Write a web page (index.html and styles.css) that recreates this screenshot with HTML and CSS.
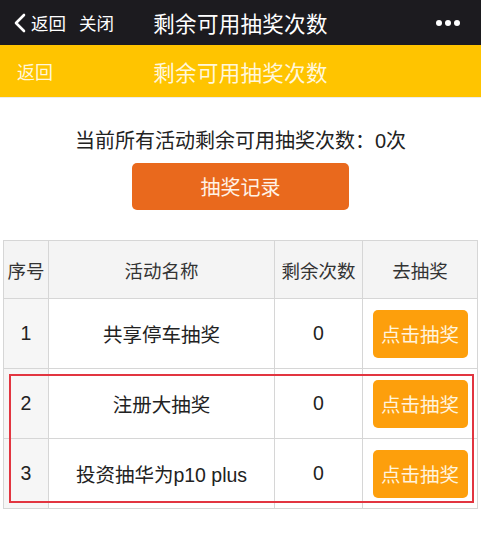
FILE: index.html
```html
<!DOCTYPE html>
<html lang="zh-CN">
<head>
<meta charset="utf-8">
<title>剩余可用抽奖次数</title>
<link rel="stylesheet" href="styles.css">
</head>
<body>
<div class="topbar">
  <div class="nav-left">
    <svg class="chev" width="14" height="20" viewBox="0 0 14 20"><path d="M11 2 L3 10 L11 18" fill="none" stroke="#fff" stroke-width="2.6" stroke-linecap="round" stroke-linejoin="round"/></svg>
    <span class="nav-back">返回</span>
    <span class="nav-close">关闭</span>
  </div>
  <div class="nav-title">剩余可用抽奖次数</div>
  <div class="nav-right">
    <span class="dot"></span><span class="dot"></span><span class="dot"></span>
  </div>
</div>
<div class="header">
  <span class="hdr-back">返回</span>
  <span class="hdr-title">剩余可用抽奖次数</span>
  <span></span>
</div>
<div class="main">
  <p class="summary">当前所有活动剩余可用抽奖次数：0次</p>
  <div class="record-wrap"><button class="record-btn">抽奖记录</button></div>
  <div class="table-wrap">
    <table class="lottery">
      <colgroup><col class="c1"><col class="c2"><col class="c3"><col class="c4"></colgroup>
      <thead>
        <tr><th>序号</th><th>活动名称</th><th>剩余次数</th><th>去抽奖</th></tr>
      </thead>
      <tbody>
        <tr><td class="idx">1</td><td>共享停车抽奖</td><td>0</td><td><button class="draw-btn">点击抽奖</button></td></tr>
        <tr><td class="idx">2</td><td>注册大抽奖</td><td>0</td><td><button class="draw-btn">点击抽奖</button></td></tr>
        <tr><td class="idx">3</td><td>投资抽华为p10 plus</td><td>0</td><td><button class="draw-btn">点击抽奖</button></td></tr>
      </tbody>
    </table>
    <div class="highlight"></div>
  </div>
</div>
</body>
</html>
```
FILE: styles.css
```css
html, body {
  margin: 0;
  padding: 0;
  background: #ffffff;
}
body {
  width: 481px;
  font-family: "Liberation Sans", "Noto Sans CJK SC", sans-serif;
  color: #222;
}
.topbar {
  height: 45px;
  background: #1c1b1f;
  display: grid;
  grid-template-columns: 1fr auto 1fr;
  align-items: center;
  color: #fff;
}
.nav-left {
  display: flex;
  align-items: center;
  padding-left: 13px;
  font-size: 17.5px;
}
.chev { margin-right: 4px; }
.nav-close { margin-left: 13px; }
.nav-title {
  font-size: 21.5px;
  letter-spacing: 0.3px;
}
.nav-right {
  display: flex;
  justify-content: flex-end;
  gap: 3px;
  padding-right: 21px;
}
.dot {
  width: 6px;
  height: 6px;
  border-radius: 50%;
  background: #fff;
}
.header {
  height: 52px;
  background: #ffc400;
  border-bottom: 1px solid #ececec;
  display: grid;
  grid-template-columns: 1fr auto 1fr;
  align-items: center;
  color: #fff7dc;
}
.hdr-back {
  padding-left: 17px;
  font-size: 18px;
}
.hdr-title {
  font-size: 21.5px;
  letter-spacing: 0.3px;
}
.main {
  padding-top: 29px;
}
.summary {
  margin: 0;
  text-align: center;
  font-size: 20px;
  line-height: 28px;
  color: #222;
}
.record-wrap {
  display: flex;
  justify-content: center;
  margin-top: 8px;
}
.record-btn {
  width: 217px;
  height: 47px;
  border: none;
  border-radius: 5px;
  background: #e9691d;
  color: #fff2e6;
  font-family: inherit;
  font-size: 20px;
  padding: 0;
}
.table-wrap {
  position: relative;
  margin: 30px 0 0 3px;
  width: 474px;
}
.lottery {
  width: 474px;
  border-collapse: collapse;
  table-layout: fixed;
  border: 1px solid #d6d6d6;
}
.c1 { width: 45px; }
.c2 { width: 226px; }
.c3 { width: 88px; }
.c4 { width: 115px; }
.lottery th, .lottery td {
  border: 1px solid #d6d6d6;
  padding: 0;
  text-align: center;
  vertical-align: middle;
}
.lottery th {
  height: 57px;
  background: #f4f4f4;
  font-weight: normal;
  font-size: 18.5px;
  color: #333;
}
.lottery td {
  height: 69px;
  font-size: 19.5px;
  color: #222;
}
.lottery td.idx {
  background: #f6f6f6;
}
.draw-btn {
  width: 95px;
  height: 48px;
  border: none;
  border-radius: 5px;
  background: #fd9f0c;
  color: #fff3dd;
  font-family: inherit;
  font-size: 19.5px;
  padding: 0;
}
.highlight {
  position: absolute;
  left: 6px;
  top: 134px;
  width: 465px;
  height: 129px;
  box-sizing: border-box;
  border: 2px solid #e23540;
}
```
